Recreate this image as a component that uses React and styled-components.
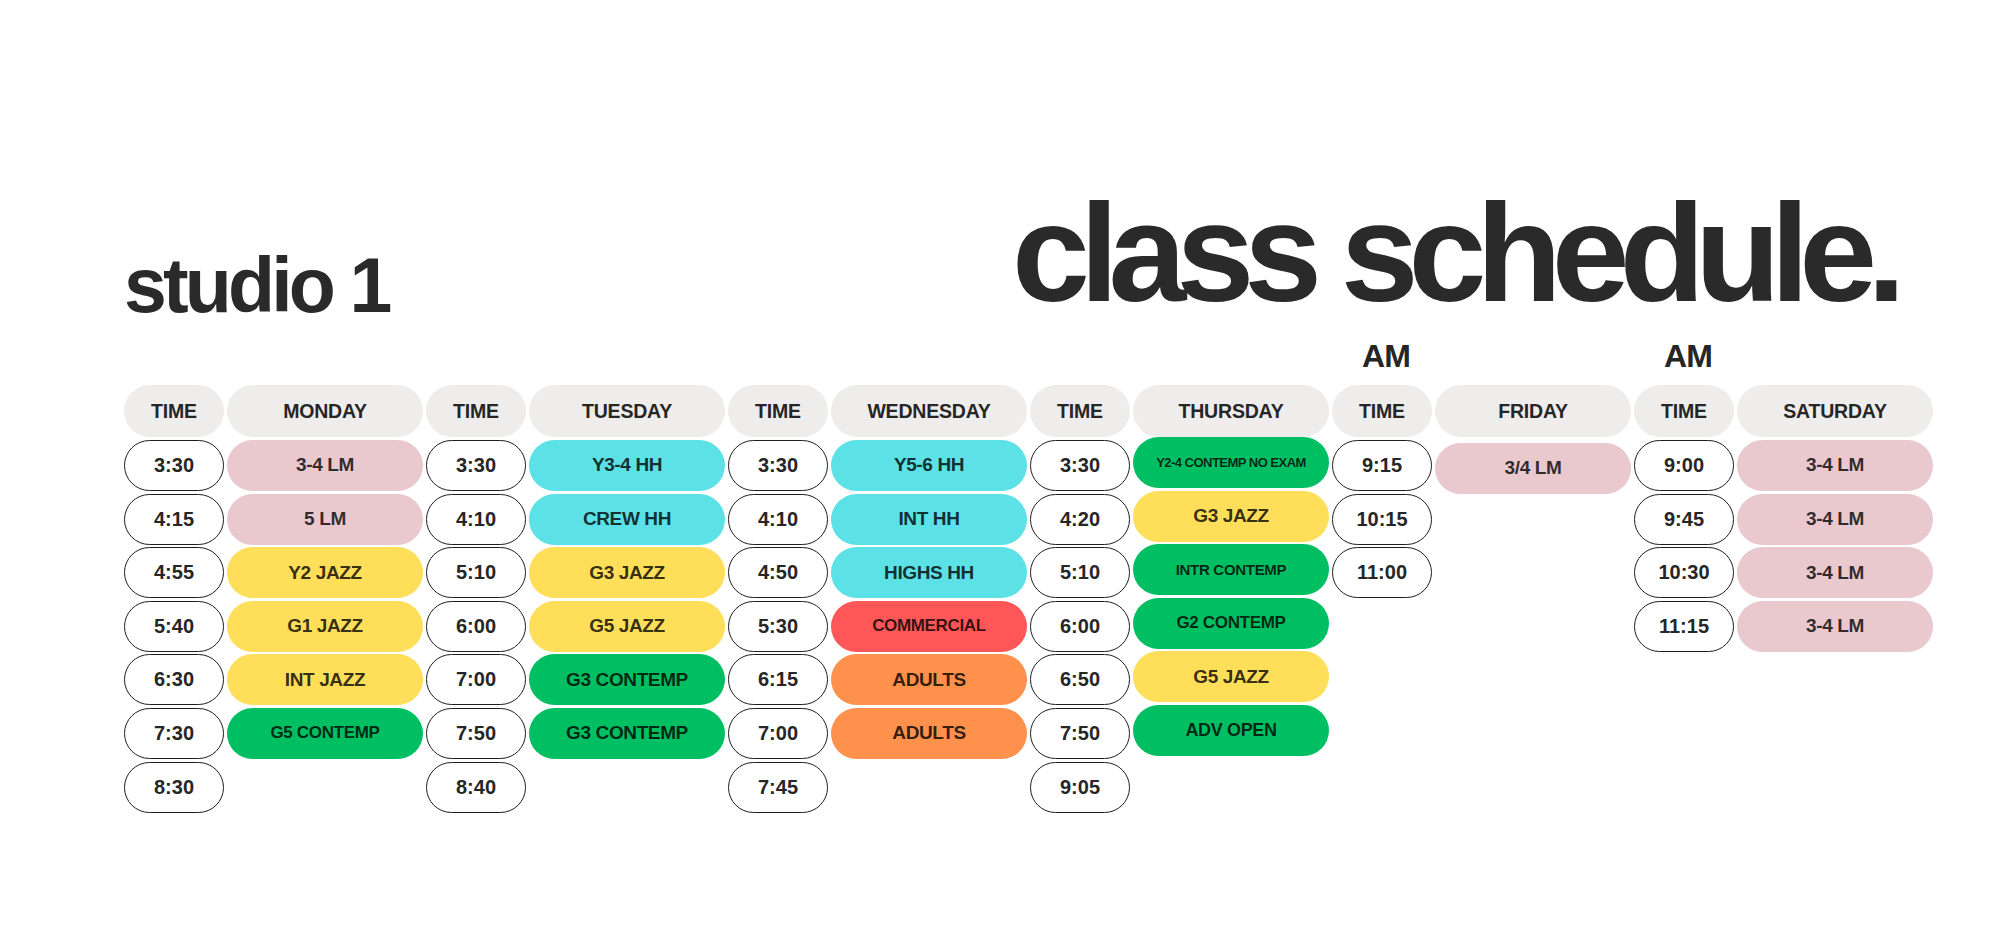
import React from 'react';
import styled, { createGlobalStyle } from 'styled-components';

const GlobalStyle = createGlobalStyle`
  html, body {
    margin: 0;
    padding: 0;
    background: #ffffff;
  }
  body {
    font-family: "Liberation Sans", Arial, sans-serif;
    color: #262626;
  }
`;

const COLORS = {
  pink: '#E9C8CE',
  cyan: '#5CE1E6',
  yellow: '#FFDE59',
  green: '#00BF63',
  red: '#FF5757',
  orange: '#FF914D',
};

const days = [
  {
    name: 'MONDAY',
    times: ['3:30', '4:15', '4:55', '5:40', '6:30', '7:30', '8:30'],
    classes: [
      { label: '3-4 LM', color: 'pink' },
      { label: '5 LM', color: 'pink' },
      { label: 'Y2 JAZZ', color: 'yellow' },
      { label: 'G1 JAZZ', color: 'yellow' },
      { label: 'INT JAZZ', color: 'yellow' },
      { label: 'G5 CONTEMP', color: 'green', size: 17 },
    ],
  },
  {
    name: 'TUESDAY',
    times: ['3:30', '4:10', '5:10', '6:00', '7:00', '7:50', '8:40'],
    classes: [
      { label: 'Y3-4 HH', color: 'cyan' },
      { label: 'CREW HH', color: 'cyan' },
      { label: 'G3 JAZZ', color: 'yellow' },
      { label: 'G5 JAZZ', color: 'yellow' },
      { label: 'G3 CONTEMP', color: 'green' },
      { label: 'G3 CONTEMP', color: 'green' },
    ],
  },
  {
    name: 'WEDNESDAY',
    times: ['3:30', '4:10', '4:50', '5:30', '6:15', '7:00', '7:45'],
    classes: [
      { label: 'Y5-6 HH', color: 'cyan' },
      { label: 'INT HH', color: 'cyan' },
      { label: 'HIGHS HH', color: 'cyan' },
      { label: 'COMMERCIAL', color: 'red', size: 17 },
      { label: 'ADULTS', color: 'orange' },
      { label: 'ADULTS', color: 'orange' },
    ],
  },
  {
    name: 'THURSDAY',
    times: ['3:30', '4:20', '5:10', '6:00', '6:50', '7:50', '9:05'],
    shift: -3,
    classes: [
      { label: 'Y2-4 CONTEMP NO EXAM', color: 'green', size: 13 },
      { label: 'G3 JAZZ', color: 'yellow' },
      { label: 'INTR CONTEMP', color: 'green', size: 15 },
      { label: 'G2 CONTEMP', color: 'green', size: 17 },
      { label: 'G5 JAZZ', color: 'yellow' },
      { label: 'ADV OPEN', color: 'green', size: 18 },
    ],
  },
  {
    name: 'FRIDAY',
    am: true,
    times: ['9:15', '10:15', '11:00'],
    shift: 3,
    classes: [{ label: '3/4 LM', color: 'pink' }],
  },
  {
    name: 'SATURDAY',
    am: true,
    times: ['9:00', '9:45', '10:30', '11:15'],
    classes: [
      { label: '3-4 LM', color: 'pink' },
      { label: '3-4 LM', color: 'pink' },
      { label: '3-4 LM', color: 'pink' },
      { label: '3-4 LM', color: 'pink' },
    ],
  },
];

const App = () => {
  return (
    <>
      <GlobalStyle />
      <Page>
        <Header>
          <StudioTitle>studio 1</StudioTitle>
          <MainTitle>class schedule.</MainTitle>
        </Header>
        <Table>
          {days.map((day) => (
            <DayGroup key={day.name}>
              <TimeColumn>
                <AmLabel>{day.am ? 'AM' : ''}</AmLabel>
                <HeaderPill>TIME</HeaderPill>
                {day.times.map((t) => (
                  <TimeCell key={t}>{t}</TimeCell>
                ))}
              </TimeColumn>
              <ClassColumn>
                <AmLabel />
                <HeaderPill>{day.name}</HeaderPill>
                <ClassList shift={day.shift || 0}>
                  {day.classes.map((c, i) => (
                    <ClassCell key={i} bg={COLORS[c.color]} size={c.size || 19}>
                      {c.label}
                    </ClassCell>
                  ))}
                </ClassList>
              </ClassColumn>
            </DayGroup>
          ))}
        </Table>
      </Page>
    </>
  );
};

export default App;

// Styled Components
const Page = styled.div`
  width: 2000px;
  height: 943px;
  box-sizing: border-box;
  padding: 183px 0 0 124px;
  background: #ffffff;
  overflow: hidden;
`;

const Header = styled.div`
  display: flex;
  align-items: flex-start;
`;

const StudioTitle = styled.h2`
  margin: 64px 0 0 0;
  width: 888px;
  flex-shrink: 0;
  font-size: 77px;
  line-height: 1;
  font-weight: 700;
  letter-spacing: -0.05em;
  color: #2a2a2a;
`;

const MainTitle = styled.h1`
  margin: 0;
  font-size: 140px;
  line-height: 1;
  font-weight: 700;
  letter-spacing: -0.072em;
  color: #2a2a2a;
  white-space: nowrap;
`;

const Table = styled.div`
  display: flex;
  gap: 3px;
  margin-top: 16px;
`;

const DayGroup = styled.div`
  display: flex;
  gap: 3px;
`;

const TimeColumn = styled.div`
  width: 100px;
  display: flex;
  flex-direction: column;
  gap: 2.6px;
`;

const ClassColumn = styled.div`
  width: 196px;
  display: flex;
  flex-direction: column;
  gap: 2.6px;
`;

const AmLabel = styled.div`
  height: 45px;
  margin-bottom: -2.6px;
  padding-left: 8px;
  box-sizing: border-box;
  text-align: center;
  font-size: 32px;
  line-height: 32px;
  font-weight: 700;
  letter-spacing: -0.03em;
  color: #262626;
`;

const HeaderPill = styled.div`
  height: 52px;
  margin-bottom: 0.4px;
  border-radius: 26px;
  background: #EFEDEC;
  display: flex;
  align-items: center;
  justify-content: center;
  font-size: 19.5px;
  font-weight: 700;
  letter-spacing: -0.01em;
  color: #262626;
`;

const TimeCell = styled.div`
  height: 51px;
  box-sizing: border-box;
  border: 1.7px solid #1e1e1e;
  border-radius: 26px;
  background: #ffffff;
  display: flex;
  align-items: center;
  justify-content: center;
  font-size: 20px;
  font-weight: 700;
  color: #262626;
`;

const ClassList = styled.div`
  display: flex;
  flex-direction: column;
  gap: 2.6px;
  margin-top: ${({ shift }) => shift}px;
`;

const ClassCell = styled.div`
  height: 51px;
  border-radius: 26px;
  background: ${({ bg }) => bg};
  display: flex;
  align-items: center;
  justify-content: center;
  font-size: ${({ size }) => size}px;
  font-weight: 700;
  letter-spacing: ${({ size }) => (size < 15 ? '-0.04em' : '-0.02em')};
  color: rgba(0, 0, 0, 0.8);
  white-space: nowrap;
`;
